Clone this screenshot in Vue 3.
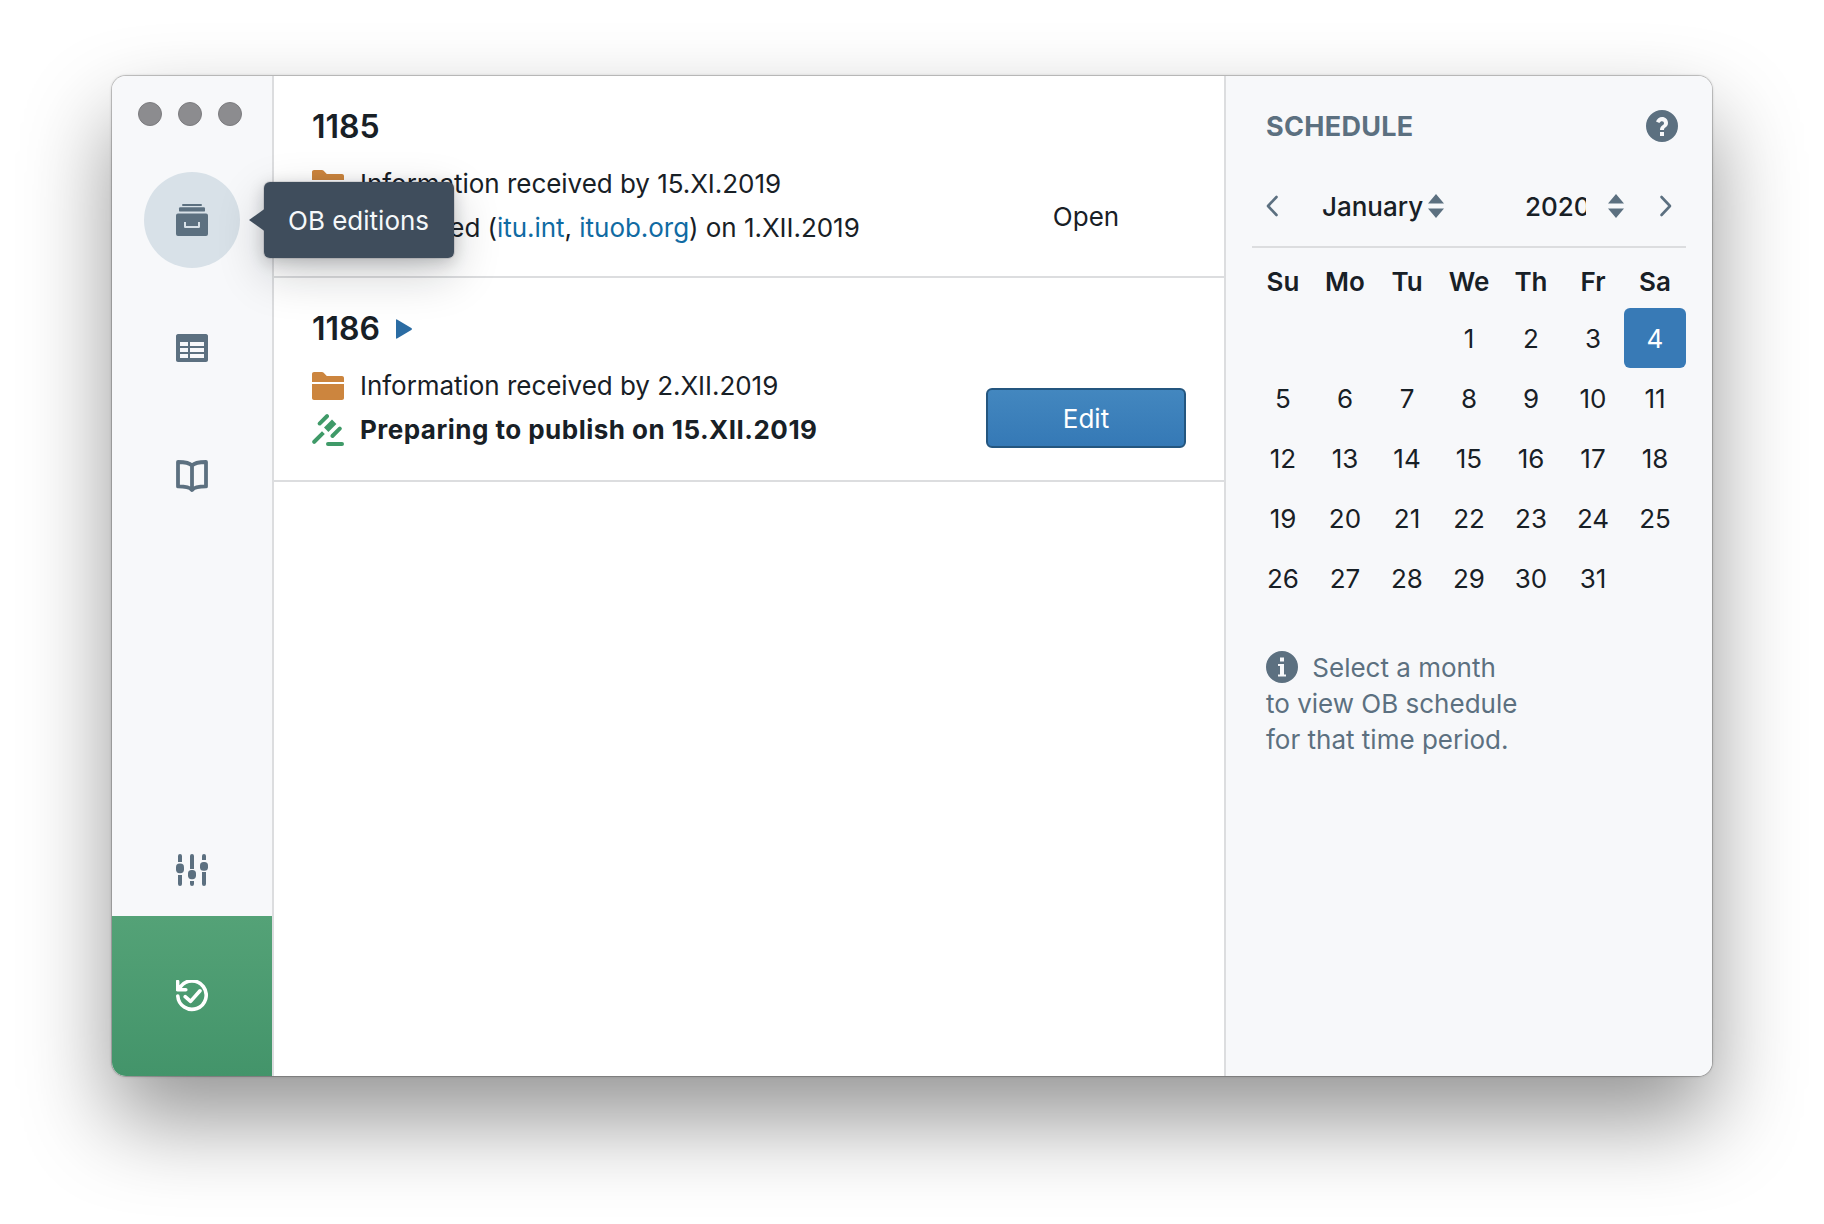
<script setup>
const weekdays = ['Su', 'Mo', 'Tu', 'We', 'Th', 'Fr', 'Sa']
const blanks = [1, 2, 3]
const days = Array.from({ length: 31 }, (_, i) => i + 1)
</script>

<template>
  <div class="stage">
    <div class="window">
      <aside class="sidebar">
        <div class="lights">
          <span></span>
          <span></span>
          <span></span>
        </div>

        <div class="nav">
          <button type="button" class="nav-item is-active">
            <svg class="icon" viewBox="0 0 16 16">
              <rect x="3" y="0" width="10" height="1" rx=".5" />
              <rect x="1.5" y="1.6" width="13" height="2.2" rx=".6" />
              <path fill-rule="evenodd" d="M1 4.8h14a1 1 0 011 1V15a1 1 0 01-1 1H1a1 1 0 01-1-1V5.800a1 1 0 011-1zM4 9v2.200c0 .5.300.800.800.800h6.400c.5 0 .800-.300.800-.800V9h-1v2H5V9H4z" />
            </svg>
          </button>
          <button type="button" class="nav-item">
            <svg class="icon" viewBox="0 0 16 16">
              <path fill-rule="evenodd" d="M15 1H1C.4 1 0 1.500 0 2v12c0 .6.400 1 1 1h14c.6 0 1-.4 1-1V2c0-.5-.4-1-1-1zM6 13H2v-2h4v2zm0-3H2V8h4v2zm0-3H2V5h4v2zm8 6H7v-2h7v2zm0-3H7V8h7v2zm0-3H7V5h7v2z" />
            </svg>
          </button>
          <button type="button" class="nav-item">
            <svg class="icon icon-line" viewBox="0 0 16 16">
              <path d="M8 2.800C7 1.600 4 1 1 1v12.200c3 0 6 .5 7 1.800 1-1.300 4-1.800 7-1.800V1C12 1 9 1.600 8 2.800zM8 2.800V15" />
            </svg>
          </button>
        </div>

        <button type="button" class="nav-item nav-settings">
          <svg class="icon" viewBox="0 0 16 16">
            <path d="M1 1a1 1 0 012 0v3H1zM1 10.500h2V15a1 1 0 01-2 0zM7 1a1 1 0 012 0v6.500H7zM7 13.500h2V15a1 1 0 01-2 0zM13 1a1 1 0 012 0v2h-2zM13 9h2v6a1 1 0 01-2 0z" />
            <rect x="0" y="4.800" width="4" height="4.800" rx="1.800" />
            <rect x="6" y="8" width="4" height="4.600" rx="1.800" />
            <rect x="12" y="4" width="4" height="4.400" rx="1.800" />
          </svg>
        </button>

        <button type="button" class="sync">
          <svg class="icon icon-white" viewBox="0 0 16 16">
            <path d="M2.300 3.300A7.100 7.100 0 11.900 8M.8 .8v4.100h4.100M4.600 8.300l2.700 2.400L12 5.400" />
          </svg>
        </button>
      </aside>

      <main class="editions">
        <section class="edition">
          <div class="edition-body">
            <h2>1185</h2>
            <p class="line">
              <svg class="line-icon folder" viewBox="0 0 16 16">
                <path d="M0 14c0 .55.450 1 1 1h14c.55 0 1-.45 1-1V7H0v7zM15 3H7.410L5.700 1.290A.965.965 0 005 1H1C.45 1 0 1.450 0 2v4h16V4c0-.55-.45-1-1-1z" />
              </svg>
              <span>Information received by 15.XI.2019</span>
            </p>
            <p class="line">
              <svg class="line-icon gavel" viewBox="0 0 16 16">
                <path d="M9.200 11a1 1 0 001.700.7l3.800-3.800a1 1 0 00-1.400-1.400l-3.800 3.800a1 1 0 00-.3.700zM3.800 5.800c.3 0 .5-.1.700-.3l3.800-3.800A1 1 0 006.900.3L3.100 4.100a1 1 0 00.7 1.700zM6 6.800l4-4 2.200 2.200-4 4zM5 8.600l-4.700 4.700a1 1 0 001.400 1.400L6.400 10zM15 14H8a1 1 0 000 2h7a1 1 0 000-2z" />
              </svg>
              <span>Published (<a href="#">itu.int</a>, <a href="#">ituob.org</a>) on 1.XII.2019</span>
            </p>
          </div>
          <button type="button" class="btn btn-plain">Open</button>
        </section>

        <section class="edition edition-tall">
          <div class="edition-body">
            <h2>
              1186
              <svg class="caret" viewBox="0 0 16 20">
                <path d="M1 0.500C.4.100 0 .4 0 1.200v17.600c0 .8.400 1.100 1 .7l14.300-8.500c.9-.6.900-1.400 0-2z" />
              </svg>
            </h2>
            <p class="line">
              <svg class="line-icon folder" viewBox="0 0 16 16">
                <path d="M0 14c0 .55.450 1 1 1h14c.55 0 1-.45 1-1V7H0v7zM15 3H7.410L5.700 1.290A.965.965 0 005 1H1C.45 1 0 1.450 0 2v4h16V4c0-.55-.45-1-1-1z" />
              </svg>
              <span>Information received by 2.XII.2019</span>
            </p>
            <p class="line">
              <svg class="line-icon gavel" viewBox="0 0 16 16">
                <path d="M9.200 11a1 1 0 001.700.7l3.800-3.800a1 1 0 00-1.400-1.400l-3.800 3.800a1 1 0 00-.3.700zM3.800 5.800c.3 0 .5-.1.700-.3l3.800-3.800A1 1 0 006.900.3L3.100 4.100a1 1 0 00.7 1.700zM6 6.800l4-4 2.200 2.200-4 4zM5 8.600l-4.700 4.700a1 1 0 001.400 1.400L6.400 10zM15 14H8a1 1 0 000 2h7a1 1 0 000-2z" />
              </svg>
              <strong>Preparing to publish on 15.XII.2019</strong>
            </p>
          </div>
          <button type="button" class="btn btn-primary">Edit</button>
        </section>
      </main>

      <aside class="schedule">
        <header class="schedule-head">
          <h3>SCHEDULE</h3>
          <svg class="help" viewBox="0 0 16 16">
            <path d="M8 0a8 8 0 100 16A8 8 0 008 0zm1 13H7v-2h2v2zm2-6.500c0 1.300-.8 1.900-1.500 2.400-.4.300-.5.500-.5 1.100H7c0-1.400.6-1.900 1.300-2.400.4-.3.700-.5.700-1 0-.6-.4-1-1-1-.5 0-1 .3-1.300.9L5 5.800C5.500 4.500 6.700 3.500 8 3.500c1.800 0 3 1.300 3 3z" />
          </svg>
        </header>

        <div class="calendar">
          <div class="month-row">
            <svg class="chevron" viewBox="0 0 14 22">
              <path d="M11.500 2L3 11l8.500 9" />
            </svg>
            <div class="picker picker-month">
              <span class="month-name">January</span>
              <svg class="updown" viewBox="0 0 18 24">
                <path d="M9 0l8 9.500H1zM9 24l-8-9.500h16z" />
              </svg>
            </div>
            <div class="picker picker-year">
              <span class="year-clip">2020</span>
              <svg class="updown" viewBox="0 0 18 24">
                <path d="M9 0l8 9.500H1zM9 24l-8-9.500h16z" />
              </svg>
            </div>
            <svg class="chevron chevron-next" viewBox="0 0 14 22">
              <path d="M2.500 2L11 11l-8.500 9" />
            </svg>
          </div>

          <div class="weekdays">
            <span v-for="day in weekdays" :key="day">{{ day }}</span>
          </div>

          <div class="days">
            <span v-for="n in blanks" :key="'blank-' + n"></span>
            <span v-for="day in days" :key="day" class="day" :class="{ 'is-selected': day === 4 }">{{ day }}</span>
          </div>
        </div>

        <div class="hint">
          <p>
            <svg class="hint-icon" viewBox="0 0 16 16">
              <path fill-rule="evenodd" d="M8 0a8 8 0 100 16A8 8 0 008 0zM7 3.200h2v2H7v-2zM10 12.800H6v-1h1V7.500H6v-1h3v5.300h1v1z" />
            </svg>
            Select a month
          </p>
          <p>to view OB schedule</p>
          <p>for that time period.</p>
        </div>
      </aside>

      <div class="tooltip">OB editions</div>
    </div>
  </div>
</template>

<style>
html,
body {
  margin: 0;
  background: #fff;
}
</style>

<style scoped>
.stage {
  box-sizing: border-box;
  width: 1824px;
  height: 1224px;
  padding: 76px 112px 148px;
  overflow: hidden;
  background: #fff;
  font-family: Inter, "Liberation Sans", sans-serif;
  color: #182026;
}

.window {
  position: relative;
  display: flex;
  height: 1000px;
  border-radius: 14px;
  background: #fff;
  box-shadow: 0 0 0 1px rgba(0, 0, 0, 0.14), 0 0 3px rgba(0, 0, 0, 0.3), 0 44px 88px rgba(0, 0, 0, 0.42);
}

.sidebar {
  flex: 0 0 162px;
  box-sizing: border-box;
  display: flex;
  flex-direction: column;
  align-items: center;
  border-right: 2px solid #dcdddf;
  border-radius: 14px 0 0 14px;
  background: #f7f8fa;
  overflow: hidden;
}

.lights {
  display: flex;
  gap: 16px;
  width: 100%;
  box-sizing: border-box;
  padding: 26px 0 0 26px;
}

.lights span {
  box-sizing: border-box;
  width: 24px;
  height: 24px;
  border-radius: 50%;
  border: 1px solid #7c7c7f;
  background: #8c8c8f;
}

.nav {
  display: flex;
  flex-direction: column;
  gap: 32px;
  margin-top: 46px;
}

.nav-item {
  display: flex;
  align-items: center;
  justify-content: center;
  width: 96px;
  height: 96px;
  padding: 0;
  border: none;
  border-radius: 50%;
  background: transparent;
}

.nav-item.is-active {
  background: #d8e1e8;
}

.nav-settings {
  margin-top: auto;
  margin-bottom: -2px;
}

.icon {
  display: block;
  width: 32px;
  height: 32px;
  fill: #5c7080;
}

.icon-line {
  fill: none;
  stroke: #5c7080;
  stroke-width: 1.900;
  stroke-linejoin: round;
}

.icon-white {
  fill: none;
  stroke: #fff;
  stroke-width: 1.800;
  stroke-linecap: round;
  stroke-linejoin: round;
}

.sync {
  display: flex;
  align-items: center;
  justify-content: center;
  flex: 0 0 160px;
  width: 100%;
  padding: 0;
  border: none;
  background: linear-gradient(#54a277, #43946a);
}

.editions {
  flex: 1 1 auto;
  min-width: 0;
  background: #fff;
}

.edition {
  box-sizing: border-box;
  display: flex;
  align-items: flex-start;
  justify-content: space-between;
  height: 202px;
  padding: 31px 38px 0;
  border-bottom: 2px solid #dcdddf;
}

.edition-tall {
  height: 204px;
}

.edition h2 {
  display: flex;
  align-items: center;
  gap: 16px;
  margin: 0 0 15px;
  font-size: 32px;
  line-height: 40px;
  font-weight: 600;
}

.caret {
  width: 16px;
  height: 20px;
  fill: #2b6ca3;
}

.line {
  display: flex;
  align-items: center;
  gap: 16px;
  margin: 0;
  font-size: 26px;
  line-height: 44px;
  letter-spacing: -0.04px;
  white-space: nowrap;
}

.line a {
  color: #106ba3;
  text-decoration: none;
}

.line strong {
  font-weight: 700;
  letter-spacing: 0.48px;
}

.line-icon {
  flex: 0 0 32px;
  width: 32px;
  height: 32px;
}

.folder {
  fill: #cc853e;
}

.gavel {
  fill: #3f9a68;
}

.btn {
  box-sizing: border-box;
  flex: 0 0 200px;
  width: 200px;
  height: 60px;
  margin-top: 79px;
  padding: 0;
  border-radius: 6px;
  font: inherit;
  font-size: 26px;
}

.btn-plain {
  border: none;
  background: transparent;
  color: #182026;
}

.btn-primary {
  border: 2px solid #24567f;
  background: linear-gradient(#4387bf, #3579b6);
  color: #fff;
}

.schedule {
  flex: 0 0 486px;
  box-sizing: border-box;
  padding: 32px 26px 0;
  border-left: 2px solid #dcdddf;
  border-radius: 0 14px 14px 0;
  background: #f7f8fa;
}

.schedule-head {
  display: flex;
  align-items: center;
  justify-content: space-between;
  height: 36px;
  padding: 0 8px 0 14px;
}

.schedule-head h3 {
  margin: 0;
  font-size: 27px;
  letter-spacing: 0.3px;
  font-weight: 700;
  color: #5c7080;
}

.help {
  width: 32px;
  height: 32px;
  fill: #5c7080;
}

.calendar {
  width: 434px;
  margin-top: 32px;
}

.month-row {
  display: flex;
  align-items: center;
  height: 60px;
  padding: 0 0 10px 13px;
  border-bottom: 2px solid #dcdddf;
  font-size: 26px;
  font-weight: 500;
}

.chevron {
  flex: 0 0 14px;
  width: 14px;
  height: 22px;
  fill: none;
  stroke: #5c7080;
  stroke-width: 2.600;
  stroke-linecap: round;
  stroke-linejoin: round;
}

.chevron-next {
  margin-left: 34px;
}

.picker {
  display: flex;
  align-items: center;
}

.picker-month {
  margin-left: 43px;
}

.picker-year {
  margin-left: 80px;
}

.month-name {
  display: block;
  width: 103px;
  white-space: nowrap;
}

.year-clip {
  display: block;
  width: 61px;
  overflow: hidden;
  white-space: nowrap;
}

.picker-month .updown {
  margin-left: 2px;
}

.picker-year .updown {
  margin-left: 21px;
}

.updown {
  flex: 0 0 18px;
  width: 18px;
  height: 24px;
  fill: #5c7080;
}

.weekdays,
.days {
  display: grid;
  grid-template-columns: repeat(7, 62px);
}

.weekdays {
  margin-top: 16px;
  margin-bottom: 8px;
}

.weekdays span {
  height: 36px;
  text-align: center;
  font-size: 26px;
  line-height: 36px;
  font-weight: 600;
}

.days {
  grid-auto-rows: 60px;
}

.day {
  display: flex;
  align-items: center;
  justify-content: center;
  font-size: 26px;
}

.day.is-selected {
  border-radius: 6px;
  background: #387ab6;
  color: #fff;
}

.hint {
  margin-top: 42px;
  padding-left: 14px;
  color: #5c7080;
  font-size: 26px;
  line-height: 36px;
}

.hint p {
  margin: 0;
}

.hint-icon {
  width: 32px;
  height: 32px;
  margin-right: 7px;
  fill: #5c7080;
  vertical-align: -6px;
}

.tooltip {
  position: absolute;
  left: 152px;
  top: 106px;
  display: flex;
  align-items: center;
  box-sizing: border-box;
  width: 190px;
  height: 76px;
  padding-left: 24px;
  border-radius: 6px;
  background: #3f4d5c;
  color: #f5f8fa;
  font-size: 26px;
  box-shadow: 0 0 0 1px rgba(16, 22, 26, 0.1), 0 4px 16px rgba(16, 22, 26, 0.2), 0 16px 48px rgba(16, 22, 26, 0.2);
}

.tooltip::before {
  content: "";
  position: absolute;
  left: -15px;
  top: 27px;
  width: 22px;
  height: 22px;
  background: #3f4d5c;
  clip-path: polygon(0 50%, 70% 0, 100% 0, 100% 100%, 70% 100%);
}
</style>
